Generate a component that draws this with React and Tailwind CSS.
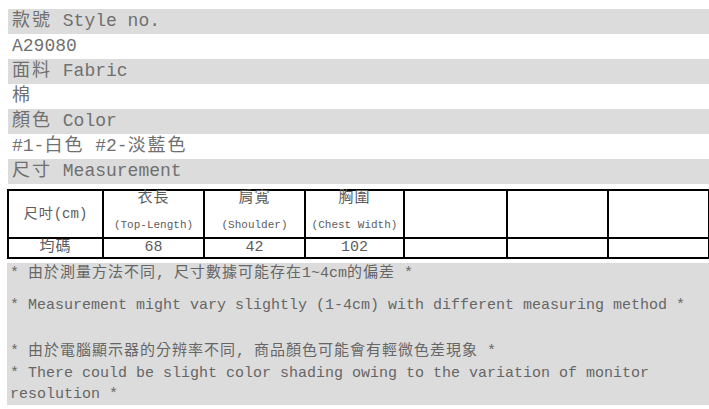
import React from "react";

const MONO = "font-['Liberation_Mono','Noto_Sans_CJK_TC',monospace]";

// wrap runs of CJK characters so they get their own spacing
const Cjk = ({ text, cls }) => {
  const parts = text.split(/([\u3000-\u9fff\uff00-\uffef]+)/);
  return (
    <>
      {parts.map((p, i) =>
        /[\u3000-\u9fff\uff00-\uffef]/.test(p) ? (
          <span key={i} className={cls}>
            {p}
          </span>
        ) : (
          <React.Fragment key={i}>{p}</React.Fragment>
        )
      )}
    </>
  );
};

const rows = [
  { gray: true, text: "款號 Style no." },
  { gray: false, text: "A29080" },
  { gray: true, text: "面料 Fabric" },
  { gray: false, text: "棉" },
  { gray: true, text: "顏色 Color" },
  { gray: false, text: "#1-白色 #2-淡藍色" },
  { gray: true, text: "尺寸 Measurement" },
];

const cols = [
  { zh: "衣長", en: "(Top-Length)", val: "68" },
  { zh: "肩寬", en: "(Shoulder)", val: "42" },
  { zh: "胸圍", en: "(Chest Width)", val: "102" },
];

const SizeTable = () => (
  <table className="table-fixed border-collapse w-[701px] text-[#5c5c5c]">
    <colgroup>
      <col className="w-[95px]" />
      <col className="w-[101px]" />
      <col className="w-[101px]" />
      <col className="w-[99px]" />
      <col className="w-[103px]" />
      <col className="w-[101px]" />
      <col className="w-[101px]" />
    </colgroup>
    <tbody>
      <tr>
        <td className="border-2 border-black p-0 align-middle text-center">
          <div className="h-[46px] leading-[46px] text-[14px]">
            <Cjk text="尺吋(cm)" cls="text-[14px] tracking-[1px]" />
          </div>
        </td>
        {cols.map((c) => (
          <td key={c.zh} className="border-2 border-black p-0 text-center">
            <div className="h-[46px] flex flex-col items-center">
              <div className="leading-[16px] text-[15px] tracking-[1px]">{c.zh}</div>
              <div className="mt-[6px] leading-[24px] text-[11px] whitespace-nowrap">{c.en}</div>
            </div>
          </td>
        ))}
        <td className="border-2 border-black p-0" />
        <td className="border-2 border-black p-0" />
        <td className="border-2 border-black p-0" />
      </tr>
      <tr>
        <td className="border-2 border-black p-0 text-center">
          <div className="h-[18px] leading-[18px] text-[15px] tracking-[1px]">均碼</div>
        </td>
        {cols.map((c) => (
          <td key={c.val} className="border-2 border-black p-0 text-center">
            <div className="h-[18px] leading-[18px] text-[15px]">{c.val}</div>
          </td>
        ))}
        <td className="border-2 border-black p-0" />
        <td className="border-2 border-black p-0" />
        <td className="border-2 border-black p-0" />
      </tr>
    </tbody>
  </table>
);

export default function App() {
  return (
    <div className={`w-[709px] h-[409px] bg-white pt-[9px] ${MONO} overflow-hidden`}>
      <div className="pl-[8px]">
        {rows.map((r, i) => (
          <div
            key={i}
            className={`h-[25px] leading-[25px] pl-[4px] text-[18px] text-[#707070] whitespace-nowrap ${
              r.gray ? "bg-[#dcdcdc]" : "bg-white"
            }`}
          >
            <Cjk text={r.text} cls="tracking-[2px]" />
          </div>
        ))}
      </div>

      <div className="pl-[7px] mt-[5px]">
        <SizeTable />
      </div>

      <div className="ml-[7px] mt-[4px] bg-[#dcdcdc] pl-[3px] text-[15px] text-[#666666]">
        <p className="leading-[22px]">
          <Cjk text="* 由於測量方法不同, 尺寸數據可能存在1~4cm的偏差 *" cls="tracking-[1px]" />
        </p>
        <p className="mt-[10px] leading-[22px]">
          * Measurement might vary slightly (1-4cm) with different measuring method *
        </p>
        <p className="mt-[24px] leading-[22px]">
          <Cjk text="* 由於電腦顯示器的分辨率不同, 商品顏色可能會有輕微色差現象 *" cls="tracking-[1px]" />
        </p>
        <p className="leading-[21px]">
          * There could be slight color shading owing to the variation of monitor resolution *
        </p>
      </div>
    </div>
  );
}
